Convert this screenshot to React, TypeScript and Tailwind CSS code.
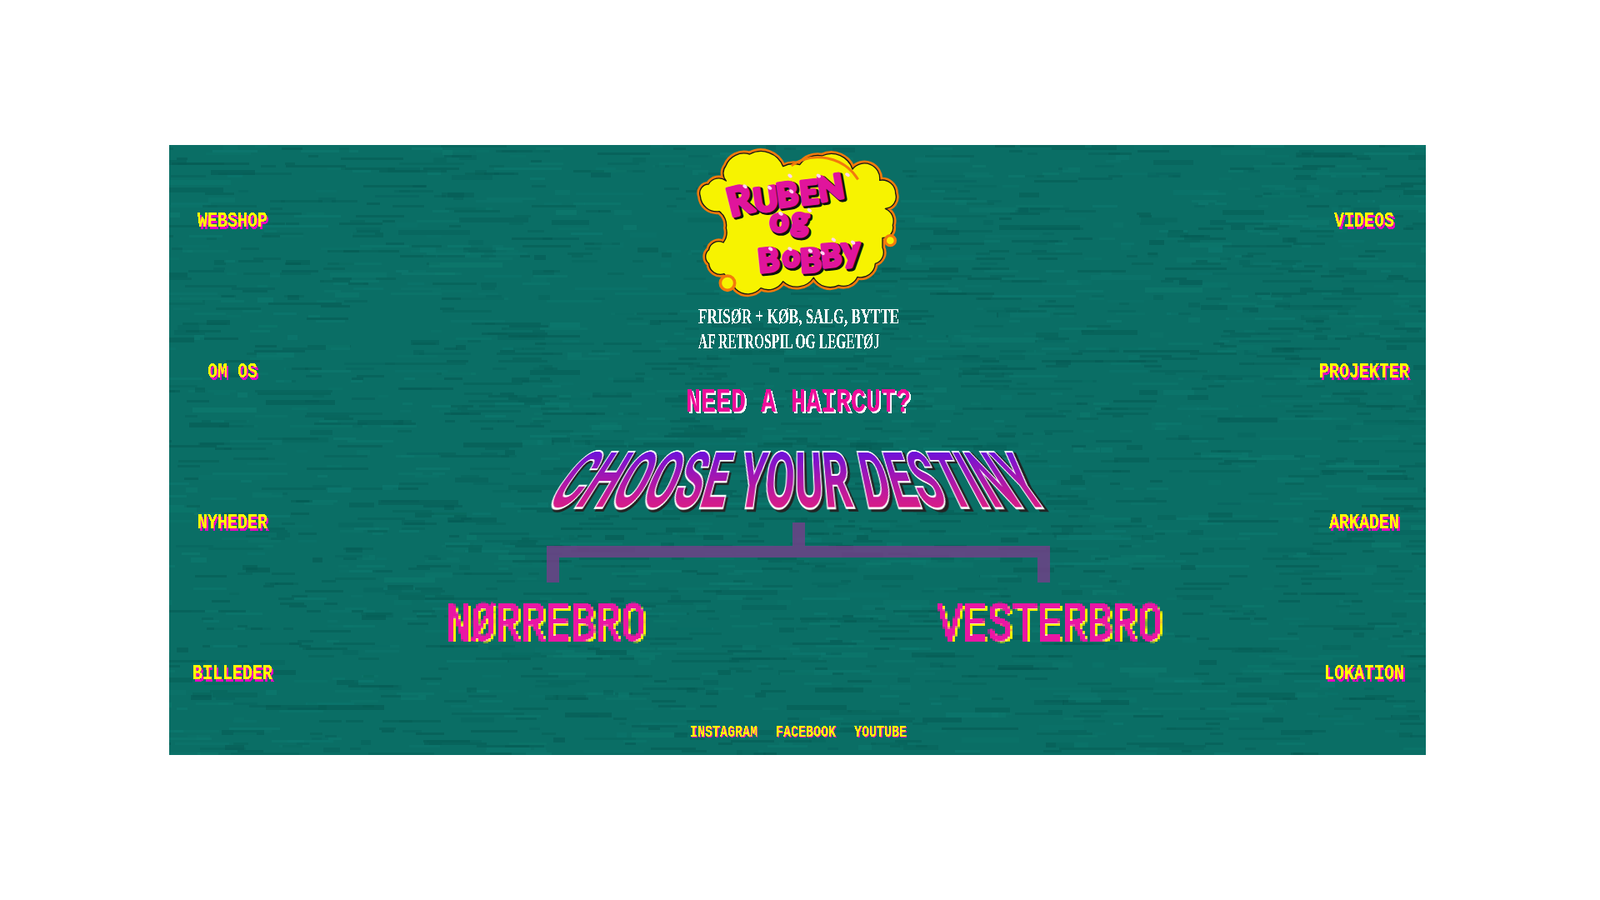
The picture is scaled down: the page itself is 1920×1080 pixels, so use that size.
import React from 'react';

// seeded so the streaks stay the same on every render
const makeStreaks = () => {
  let seed = 1337;
  const rnd = () => {
    seed = (seed * 16807) % 2147483647;
    return seed / 2147483647;
  };
  const list: { x: number; y: number; w: number; h: number; fill: string; o: number }[] = [];
  for (let i = 0; i < 2800; i++) {
    const dark = rnd() < 0.6;
    list.push({
      x: Math.floor(rnd() * 1540) - 30,
      y: Math.floor(rnd() * 244) * 3,
      w: 12 + Math.floor(rnd() * rnd() * 90),
      h: rnd() < 0.8 ? 3 : 6,
      fill: dark ? '#055a53' : '#0d7b70',
      o: 0.2 + rnd() * 0.4,
    });
  }
  return list;
};

const streaks = makeStreaks();

const leftNav = ['WEBSHOP', 'OM OS', 'NYHEDER', 'BILLEDER'];
const rightNav = ['VIDEOS', 'PROJEKTER', 'ARKADEN', 'LOKATION'];
const socials = ['INSTAGRAM', 'FACEBOOK', 'YOUTUBE'];

const logoLetters = [
  { c: 'R', x: 232, y: 270, s: 140, r: -14 },
  { c: 'U', x: 320, y: 254, s: 118, r: -8 },
  { c: 'B', x: 402, y: 236, s: 118, r: -8 },
  { c: 'E', x: 484, y: 226, s: 116, r: -6 },
  { c: 'N', x: 552, y: 216, s: 122, r: -10 },
  { c: 'o', x: 372, y: 322, s: 118, r: 0 },
  { c: 'g', x: 448, y: 316, s: 118, r: 4 },
  { c: 'B', x: 334, y: 470, s: 116, r: -6 },
  { c: 'o', x: 418, y: 448, s: 108, r: 0 },
  { c: 'B', x: 484, y: 470, s: 116, r: -4 },
  { c: 'B', x: 560, y: 452, s: 112, r: -6 },
  { c: 'y', x: 634, y: 432, s: 124, r: -4 },
];

const highlights = [
  [283, 160], [372, 165], [445, 122], [450, 178], [548, 122], [652, 118], [412, 258], [515, 246],
  [375, 385], [445, 385], [518, 392], [602, 352], [672, 362], [562, 400],
];

const cloud =
  'M122 195 A32 32 0 0 1 152 152 A42 42 0 0 1 215 140 A42 42 0 0 1 214 86 A70 70 0 0 1 300 44 A85 85 0 0 1 420 88 A80 80 0 0 1 480 82 A80 80 0 0 1 560 50 A80 80 0 0 1 670 98 A55 55 0 0 1 768 138 A48 48 0 0 1 825 185 A42 42 0 0 1 788 240 A48 48 0 0 1 815 300 A36 36 0 0 1 778 345 L778 380 A42 42 0 0 1 752 438 A52 52 0 0 1 688 486 A55 55 0 0 1 620 516 A68 68 0 0 1 530 488 A72 72 0 0 1 420 502 A62 62 0 0 1 340 526 A62 62 0 0 1 250 530 L208 475 A42 42 0 0 1 153 438 A32 32 0 0 1 153 388 A36 36 0 0 1 205 362 A60 60 0 0 0 215 310 A60 60 0 0 0 190 250 A60 60 0 0 1 122 195 Z';

const Logo = () => (
  <svg viewBox="100 20 750 540" className="w-[250px] h-[180px] block">
    <path d={cloud} fill="#f7f300" stroke="#f27a0c" strokeWidth={20} strokeLinejoin="round" />
    <path d={cloud} fill="#f7f300" stroke="#161616" strokeWidth={4} strokeLinejoin="round" />
    <path d="M450 85 A170 170 0 0 1 690 135" fill="none" stroke="#f27a0c" strokeWidth={9} />
    <circle cx={220} cy={508} r={26} fill="#f7f300" stroke="#f27a0c" strokeWidth={11} />
    <circle cx={806} cy={355} r={18} fill="#f7f300" stroke="#f27a0c" strokeWidth={10} />
    <g className="font-['Lato',sans-serif]" fontWeight={700} strokeLinejoin="round">
      {logoLetters.map((l, i) => (
        <text
          key={'s' + i}
          x={l.x + 6}
          y={l.y + 6}
          fontSize={l.s}
          fill="#101010"
          stroke="#101010"
          strokeWidth={17}
          transform={`rotate(${l.r} ${l.x} ${l.y})`}
        >
          {l.c}
        </text>
      ))}
      {logoLetters.map((l, i) => (
        <text
          key={'m' + i}
          x={l.x}
          y={l.y}
          fontSize={l.s}
          fill="#e0149c"
          stroke="#e0149c"
          strokeWidth={12}
          transform={`rotate(${l.r} ${l.x} ${l.y})`}
        >
          {l.c}
        </text>
      ))}
    </g>
    {highlights.map(([x, y], i) => (
      <ellipse key={i} cx={x} cy={y} rx={9} ry={6} fill="#ffd6f2" transform={`rotate(35 ${x} ${y})`} />
    ))}
  </svg>
);

const Destiny = () => (
  <div className="h-[72px] flex items-end justify-center">
    <svg
      viewBox="0 0 634 130"
      className="w-[634px] h-[130px] shrink-0 overflow-visible origin-bottom [transform:perspective(360px)_rotateX(41deg)]"
    >
      <defs>
        <linearGradient id="destinyFill" gradientUnits="userSpaceOnUse" x1="0" y1="14" x2="0" y2="124">
          <stop offset="0" stopColor="#6a10dc" />
          <stop offset="1" stopColor="#d81c88" />
        </linearGradient>
      </defs>
      <g className="font-['Roboto',sans-serif]" fontWeight={700} fontSize={148}>
        <text x={10} y={128} textLength={619} lengthAdjust="spacingAndGlyphs" fill="#222" stroke="#222" strokeWidth={7}>
          CHOOSE YOUR DESTINY
        </text>
        <text x={7} y={124} textLength={619} lengthAdjust="spacingAndGlyphs" fill="#fff" stroke="#fff" strokeWidth={7}>
          CHOOSE YOUR DESTINY
        </text>
        <text x={7} y={124} textLength={619} lengthAdjust="spacingAndGlyphs" fill="url(#destinyFill)">
          CHOOSE YOUR DESTINY
        </text>
      </g>
    </svg>
  </div>
);

const NavColumn = ({ items, className }: { items: string[]; className: string }) => (
  <div className={`flex flex-col shrink-0 pt-[1px] ${className}`}>
    {items.map((item) => (
      <a
        key={item}
        className="h-[181px] flex items-center justify-center font-['Liberation_Mono',monospace] font-bold text-[20px] text-[#ffff00] scale-y-[1.25] [text-shadow:2px_2px_0_#e800c0] [filter:url(#crisp)]"
      >
        {item}
      </a>
    ))}
  </div>
);

const App: React.FC = () => {
  return (
    <div className="w-[1920px] h-[1080px] bg-white pt-[174px] pl-[203px] overflow-hidden">
      <svg className="absolute w-0 h-0">
        <filter id="crisp">
          <feComponentTransfer>
            <feFuncA type="discrete" tableValues="0 1" />
          </feComponentTransfer>
        </filter>
        <filter id="pixelate" x="0" y="0" width="100%" height="100%">
          <feFlood x="1" y="1" width="1" height="1" />
          <feComposite width="3" height="3" />
          <feTile result="grid" />
          <feComposite in="SourceGraphic" in2="grid" operator="in" />
          <feMorphology operator="dilate" radius="1" />
        </filter>
      </svg>
      <div className="relative w-[1508px] h-[732px] bg-[#0a6e65] flex overflow-hidden">
        <svg viewBox="0 0 1508 732" className="absolute inset-0 w-full h-full">
          {streaks.map((s, i) => (
            <rect key={i} x={s.x} y={s.y} width={s.w} height={s.h} fill={s.fill} opacity={s.o} />
          ))}
        </svg>

        <NavColumn items={leftNav} className="relative w-[152px]" />

        <main className="relative flex-1 flex flex-col items-center pt-[3px]">
          <Logo />
          <p className="mt-[8px] w-[240px] font-['Liberation_Serif',serif] font-bold text-[25px] leading-[30px] text-white whitespace-nowrap [filter:url(#crisp)]">
            <span className="block origin-left scale-x-[0.68]">FRISØR + KØB, SALG, BYTTE</span>
            <span className="block origin-left scale-x-[0.62]">AF RETROSPIL OG LEGETØJ</span>
          </p>
          <h2 className="mt-[41px] h-[34px] font-['Liberation_Mono',monospace] font-bold text-[30px] leading-[34px] text-[#ee1199] scale-y-[1.35] [text-shadow:2px_2px_0_#fff] [filter:url(#crisp)]">
            NEED A HAIRCUT?
          </h2>
          <div className="mt-[41px]">
            <Destiny />
          </div>

          {/* bracket between the title and the two shops */}
          <div className="mt-[14px] flex flex-col items-center w-[604px]">
            <div className="w-[15px] h-[28px] bg-[#743e8a]/80" />
            <div className="w-full h-[14px] bg-[#743e8a]/80" />
            <div className="w-full flex justify-between">
              <div className="w-[15px] h-[30px] bg-[#743e8a]/80" />
              <div className="w-[15px] h-[30px] bg-[#743e8a]/80" />
            </div>
          </div>

          <div className="mt-[24px] w-full flex pl-[180px] gap-[350px] font-['Liberation_Mono',monospace] font-normal text-[50px] leading-[56px] text-[#ea14a4] [-webkit-text-stroke:1.5px_#ea14a4]">
            <a className="scale-y-[1.3] [text-shadow:3px_2px_0_#f5f000] [filter:url(#pixelate)]">NØRREBRO</a>
            <a className="scale-y-[1.3] [text-shadow:3px_2px_0_#f5f000] [filter:url(#pixelate)]">VESTERBRO</a>
          </div>

          <div className="mt-[92px] flex gap-[22px] font-['Liberation_Mono',monospace] font-bold text-[15px] leading-[18px] text-[#ffff00] [text-shadow:1px_1px_0_#e800c0]">
            {socials.map((s) => (
              <a key={s} className="scale-y-[1.35] [filter:url(#crisp)]">
                {s}
              </a>
            ))}
          </div>
        </main>

        <NavColumn items={rightNav} className="relative w-[150px] pl-[2px]" />
      </div>
    </div>
  );
};

export default App;
